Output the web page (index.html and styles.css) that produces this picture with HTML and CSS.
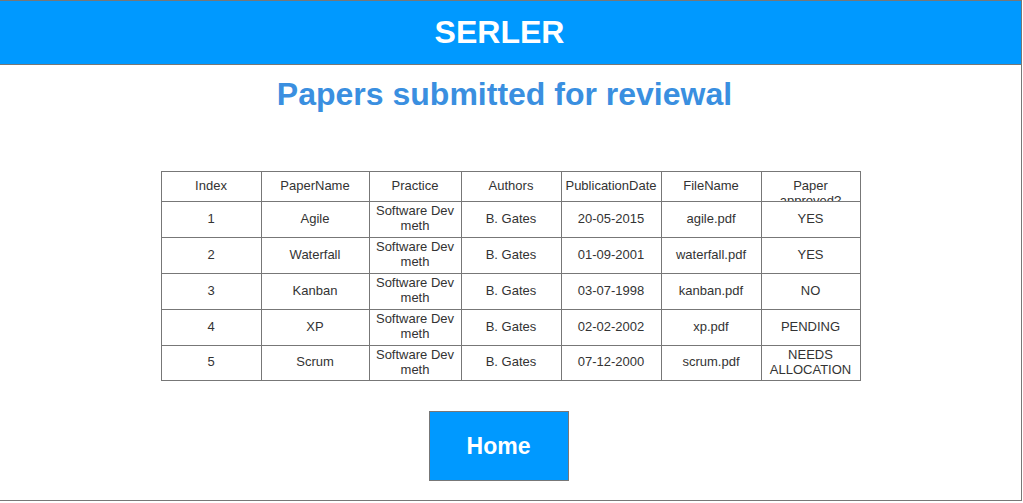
FILE: index.html
```html
<!DOCTYPE html>
<html>
<head>
<meta charset="utf-8">
<link rel="stylesheet" href="styles.css">
</head>
<body>
<div class="page">
  <header class="topbar"><span class="brand">SERLER</span></header>
  <h1 class="title">Papers submitted for reviewal</h1>
  <table class="papers">
    <thead>
      <tr>
        <th class="c1"><div class="hcell">Index</div></th>
        <th class="c2"><div class="hcell">PaperName</div></th>
        <th class="c3"><div class="hcell">Practice</div></th>
        <th class="c4"><div class="hcell">Authors</div></th>
        <th class="c5"><div class="hcell">PublicationDate</div></th>
        <th class="c6"><div class="hcell">FileName</div></th>
        <th class="c7"><div class="hcell">Paper approved?</div></th>
      </tr>
    </thead>
    <tbody>
      <tr><td>1</td><td>Agile</td><td>Software Dev meth</td><td>B. Gates</td><td>20-05-2015</td><td>agile.pdf</td><td>YES</td></tr>
      <tr><td>2</td><td>Waterfall</td><td>Software Dev meth</td><td>B. Gates</td><td>01-09-2001</td><td>waterfall.pdf</td><td>YES</td></tr>
      <tr><td>3</td><td>Kanban</td><td>Software Dev meth</td><td>B. Gates</td><td>03-07-1998</td><td>kanban.pdf</td><td>NO</td></tr>
      <tr><td>4</td><td>XP</td><td>Software Dev meth</td><td>B. Gates</td><td>02-02-2002</td><td>xp.pdf</td><td>PENDING</td></tr>
      <tr><td>5</td><td>Scrum</td><td>Software Dev meth</td><td>B. Gates</td><td>07-12-2000</td><td>scrum.pdf</td><td>NEEDS ALLOCATION</td></tr>
    </tbody>
  </table>
  <div class="actions"><button class="home">Home</button></div>
</div>
</body>
</html>
```
FILE: styles.css
```css
html, body {
  margin: 0;
  padding: 0;
  background: #fff;
}
body {
  font-family: "Liberation Sans", Arial, sans-serif;
}
.page {
  width: 1021px;
  height: 499px;
  border-top: 1px solid #777;
  border-right: 1px solid #777;
  border-bottom: 1px solid #777;
  display: flex;
  flex-direction: column;
  align-items: center;
}
.topbar {
  align-self: stretch;
  height: 63px;
  background: #0099ff;
  border-bottom: 1px solid #777;
  display: flex;
  align-items: center;
  justify-content: center;
  padding-right: 22px;
}
.brand {
  color: #fff;
  font-weight: bold;
  font-size: 32px;
  line-height: 37px;
}
.title {
  margin: 11px 12px 0 0;
  font-size: 32px;
  line-height: 37px;
  font-weight: bold;
  color: #3a8fe0;
}
.papers {
  margin-top: 58px;
  border-collapse: collapse;
  width: 699px;
  font-size: 13px;
  line-height: 15px;
  color: #333;
  table-layout: fixed;
}
.papers th, .papers td {
  border: 1px solid #777;
  text-align: center;
  padding: 0;
  font-weight: normal;
}
.papers td {
  height: 36px;
  padding-bottom: 3px;
  box-sizing: border-box;
}
.papers tbody tr:last-child td {
  height: 35px;
}
.c1 { width: 99px; }
.c2 { width: 107px; }
.c3 { width: 91px; }
.c4 { width: 99px; }
.c5 { width: 99px; }
.c6 { width: 99px; }
.c7 { width: 98px; }
.hcell {
  height: 29px;
  box-sizing: border-box;
  padding: 6px 2px 0;
  overflow: hidden;
}
.actions {
  margin-top: 30px;
  padding-right: 24px;
}
.home {
  width: 140px;
  height: 70px;
  background: #0099ff;
  border: 1px solid #777;
  color: #fff;
  font-family: "Liberation Sans", Arial, sans-serif;
  font-weight: bold;
  font-size: 23px;
  padding: 0;
}
```
